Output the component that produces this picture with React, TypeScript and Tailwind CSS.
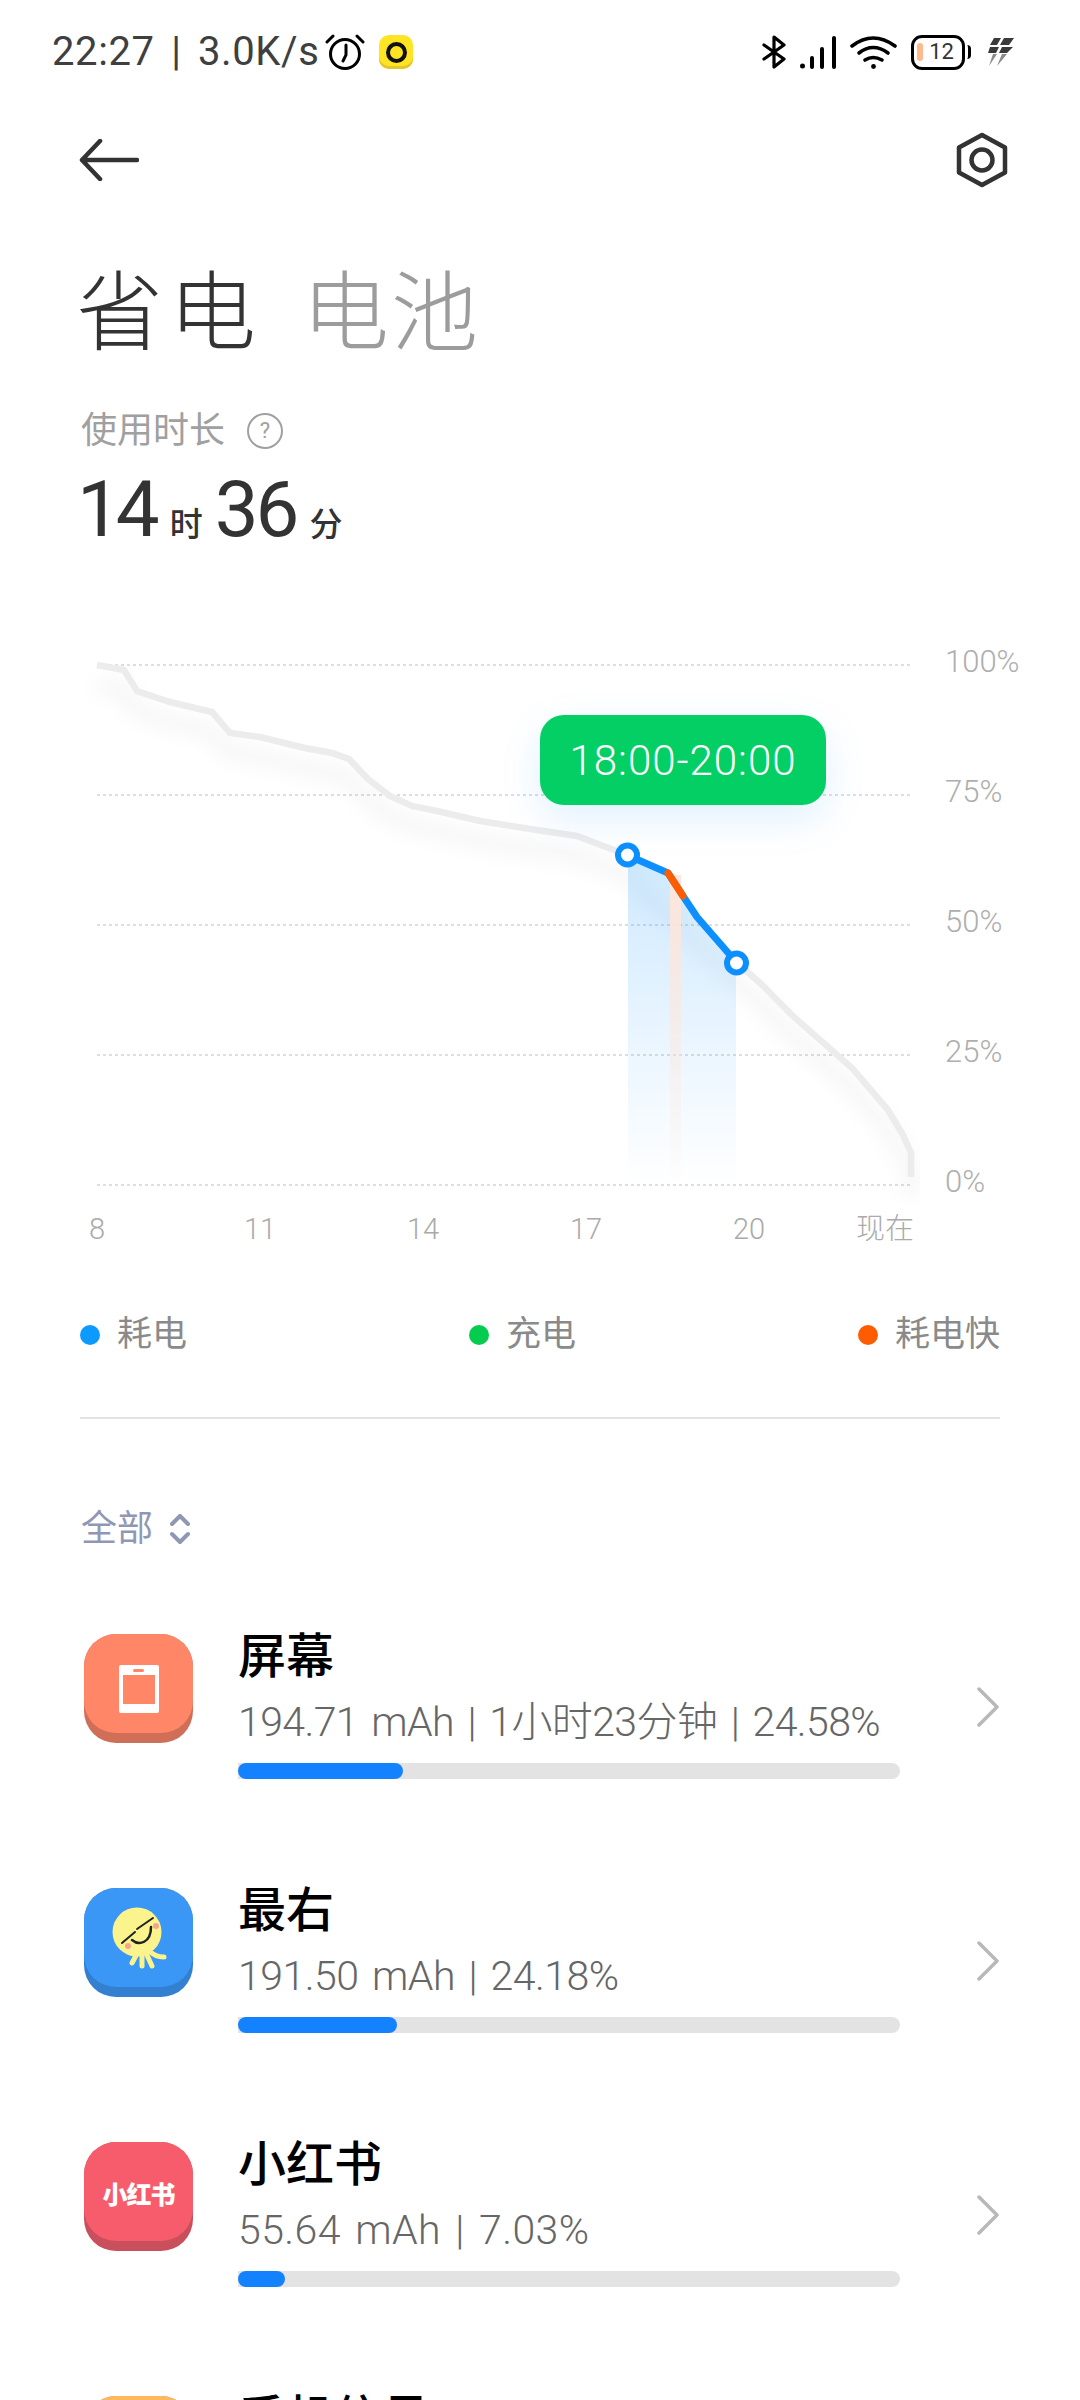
import React from 'react';

const grayBefore = '97,665 124,670 137,691 170,702 212,712 230,733 260,737 305,748 332,753 349,759 368,779 390,796 412,806 437,811 480,821 537,830 577,836 627,855';
const grayAfter = '737,963 760,983 795,1018 852,1068 888,1110 903,1135 911,1153 911,1177';

const PhoneIcon = () => (
  <svg className="mt-[10px]" width="42" height="48" viewBox="0 0 42 48">
    <rect x="1" y="0" width="40" height="48" rx="2" fill="#fff" />
    <rect x="5" y="10" width="32" height="29" fill="#ff8768" />
    <rect x="15" y="4" width="11" height="3" rx="1.5" fill="#ff8768" />
  </svg>
);

const OctopusIcon = () => (
  <svg width="60" height="66" viewBox="0 0 60 66" fill="none">
    <g stroke="#fbf38c" strokeWidth="5" strokeLinecap="round">
      <path d="M29 47 L23 58" />
      <path d="M33 49 L33 61" />
      <path d="M37 48 L43 61" />
      <path d="M39 45 Q46 52 55 52" />
    </g>
    <circle cx="28" cy="27" r="24.5" fill="#fbf38c" />
    <circle cx="47" cy="21" r="3" fill="#f5a58c" />
    <circle cx="19" cy="41" r="3" fill="#f5a58c" />
    <path d="M13 38 L26 27 M28 24 L44 13" stroke="#222" strokeWidth="2" strokeLinecap="round" />
    <path d="M23 35 C30 41 42 38 42 22" stroke="#222" strokeWidth="2.5" strokeLinecap="round" />
  </svg>
);

const rows = [
  { name: '屏幕', detail: '194.71 mAh | 1小时23分钟 | 24.58%', fill: 165, spacing: 'tracking-[-0.6px]', face: 'bg-[#ff8768]', edge: 'bg-[#d06f57]', icon: <PhoneIcon /> },
  { name: '最右', detail: '191.50 mAh | 24.18%', fill: 159, spacing: 'tracking-[-0.5px]', face: 'bg-[#3a97f5]', edge: 'bg-[#337fd0]', icon: <OctopusIcon /> },
  { name: '小红书', detail: '55.64 mAh | 7.03%', fill: 47, spacing: 'tracking-[0.4px]', face: 'bg-[#f65c6b]', edge: 'bg-[#c94f5c]', icon: <span className="pt-[8px] text-[25px] leading-none font-black tracking-[-1px] text-white">小红书</span> },
  { name: '手机信号', detail: '49.12 mAh | 6.20%', fill: 42, spacing: 'tracking-[0.4px]', face: 'bg-[#ffb85c]', edge: 'bg-[#d09a50]', icon: null },
];

const StatusIcons = () => (
  <div className="flex items-center">
    <svg width="24" height="34" viewBox="0 0 24 34" fill="none" stroke="#000" strokeWidth="3.2" strokeLinecap="round" strokeLinejoin="round">
      <path d="M2 10 L22 24 L12 32 L12 2 L22 10 L2 24" />
    </svg>
    <svg className="ml-[14px]" width="37" height="33" viewBox="0 0 37 33" fill="#000">
      <circle cx="2.5" cy="30" r="2.5" />
      <rect x="10" y="20" width="4" height="13" rx="2" />
      <rect x="20" y="11" width="4" height="22" rx="2" />
      <rect x="32" y="0" width="4" height="33" rx="2" />
    </svg>
    <svg className="ml-[13px]" width="47" height="34" viewBox="0 0 47 34" fill="none" stroke="#000" strokeWidth="3.6" strokeLinecap="round">
      <path d="M2 11 Q23 -5 45 11" />
      <path d="M9 18 Q23 7 38 18" />
      <path d="M15 25 Q23 20 32 25" />
      <circle cx="23.5" cy="31.5" r="2.4" fill="#000" stroke="none" />
    </svg>
    <div className="relative ml-[14px] flex h-[35px] w-[54px] items-center justify-center rounded-[11px] border-[3px] border-black">
      <span className="absolute left-[3px] h-[18px] w-[6px] rounded-full bg-[#ffb98a]" />
      <span className="ml-[7px] text-[22px] leading-none text-[#333]">12</span>
      <span className="absolute right-[-9px] h-[14px] w-[4px] rounded-r-full border-r-[3px] border-black" />
    </div>
    <svg className="ml-[23px]" width="27" height="28" viewBox="0 0 27 28" fill="#3a3a3a">
      <path d="M6 0 H13 L9 7 H2 Z" />
      <path d="M16 0 H26 L21 7 H12 Z" />
      <path d="M2 9 H11 L8 15 H0 Z" />
      <path d="M14 9 H25 L19 15 H11 Z" />
      <path d="M5 16 H9 L1 28 Z" fill="#8a8a8a" />
      <path d="M14 16 H19 L9 28 Z" fill="#8a8a8a" />
    </svg>
  </div>
);

const App: React.FC = () => {
  return (
    <div className="h-[2400px] w-[1080px] overflow-hidden bg-white font-['Roboto','Noto_Sans_CJK_SC',sans-serif]">
      {/* status bar */}
      <div className="flex h-[105px] items-center pl-[52px] pr-[65px] pb-[1px]">
        <span className="text-[40px] leading-none tracking-[0.6px] text-[#3f3f3f] [word-spacing:6px]">22:27 | 3.0K/s</span>
        <svg className="ml-[6px]" width="40" height="36" viewBox="0 0 40 36" fill="none" stroke="#000" strokeWidth="3" strokeLinecap="round">
          <circle cx="20" cy="20" r="14.5" />
          <path d="M21 11 V21 L18 27" />
          <path d="M2 8 L8 2 M32 2 L38 8" />
        </svg>
        <div className="ml-[14px] flex h-[34px] w-[34px] items-center justify-center rounded-[10px] bg-[#ffe423] shadow-[inset_0_-3px_0_#e3c62a]">
          <span className="h-[21px] w-[21px] rounded-full border-[4px] border-[#111]" />
        </div>
        <div className="ml-auto"><StatusIcons /></div>
      </div>

      {/* nav */}
      <div className="flex h-[110px] items-center justify-between pl-[79px] pr-[72px]">
        <svg width="60" height="42" viewBox="0 0 60 42" fill="none" stroke="#333" strokeWidth="4.5" strokeLinecap="round" strokeLinejoin="round">
          <path d="M21 2 L3 21 L21 40 M3 21 H58" />
        </svg>
        <svg width="52" height="56" viewBox="0 0 52 56" fill="none" stroke="#333" strokeWidth="4.5" strokeLinejoin="round">
          <path d="M26 3 L49 15.5 V40.5 L26 53 L3 40.5 V15.5 Z" />
          <circle cx="26" cy="28" r="10.5" />
        </svg>
      </div>

      {/* title tabs */}
      <div className="mt-[49px] flex pl-[76px] text-[87px] leading-[100px] font-light">
        <span className="tracking-[6px] text-[#333]">省电</span>
        <span className="ml-[40px] tracking-[2px] text-[#9c9c9c]">电池</span>
      </div>

      {/* usage time */}
      <div className="mt-[47px] flex items-center pl-[81px]">
        <span className="text-[36px] leading-[40px] text-[#a0a0a0]">使用时长</span>
        <span className="ml-[22px] flex h-[36px] w-[36px] items-center justify-center rounded-full border-[2px] border-[#a0a0a0] text-[22px] leading-none text-[#a0a0a0]">?</span>
      </div>
      <div className="mt-[14px] flex items-baseline pl-[77px] text-[#333]">
        <span className="text-[78px] leading-[90px] tracking-[-5px]">14</span>
        <span className="ml-[15px] text-[33px] font-medium">时</span>
        <span className="ml-[12px] text-[78px] leading-[90px] tracking-[-3px]">36</span>
        <span className="ml-[13px] text-[33px] font-medium">分</span>
      </div>

      {/* chart */}
      <div className="relative mt-[85px] flex">
        <svg className="ml-[80px] shrink-0" width="840" height="565" viewBox="80 640 840 565" fill="none">
          <defs>
            <filter id="blur" x="-10%" y="-10%" width="120%" height="120%">
              <feGaussianBlur stdDeviation="10" />
            </filter>
            <linearGradient id="blueFade" gradientUnits="userSpaceOnUse" x1="0" y1="855" x2="0" y2="1185">
              <stop offset="0" stopColor="#2aa0ff" stopOpacity="0.23" />
              <stop offset="1" stopColor="#2aa0ff" stopOpacity="0" />
            </linearGradient>
            <linearGradient id="orangeFade" gradientUnits="userSpaceOnUse" x1="0" y1="880" x2="0" y2="1185">
              <stop offset="0" stopColor="#ffe6da" stopOpacity="1" />
              <stop offset="1" stopColor="#ffe6da" stopOpacity="0" />
            </linearGradient>
          </defs>
          {[665, 795, 925, 1055, 1185].map((y) => (
            <line key={y} x1="97" x2="913" y1={y} y2={y} stroke="#d4d4d4" strokeWidth="1.5" strokeDasharray="3 3" />
          ))}
          <polyline points={`${grayBefore} 737,963 ${grayAfter}`} stroke="#000" strokeOpacity="0.07" strokeWidth="8" transform="translate(0 20)" filter="url(#blur)" />
          <polygon points="628,855 668,873 683,896 697,917 736,963 736,1185 628,1185" fill="url(#blueFade)" />
          <rect x="670" y="875" width="11" height="310" fill="url(#orangeFade)" />
          <polyline points={grayBefore} stroke="#ececec" strokeWidth="6.5" />
          <polyline points={grayAfter} stroke="#ececec" strokeWidth="6.5" />
          <polyline points="627,855 668,873 683,896 697,917 737,963" stroke="#0d8fff" strokeWidth="7" strokeLinejoin="round" />
          <polyline points="668,873 683,896" stroke="#ff5c00" strokeWidth="7" strokeLinecap="round" />
          <circle cx="627.5" cy="855" r="9.5" fill="#fff" stroke="#0d8fff" strokeWidth="6" />
          <circle cx="736.5" cy="963" r="9.5" fill="#fff" stroke="#0d8fff" strokeWidth="6" />
        </svg>
        <div className="ml-[25px] mt-[2px] flex flex-col gap-[90px] text-[31px] leading-[40px] font-light text-[#aeaeae]">
          <span>100%</span>
          <span>75%</span>
          <span>50%</span>
          <span>25%</span>
          <span>0%</span>
        </div>
        <div className="absolute left-[540px] top-[75px] flex h-[90px] w-[286px] items-center justify-center rounded-[24px] bg-[#04cf65] text-[42px] font-light tracking-[1px] text-white shadow-[0_14px_40px_rgba(13,143,255,0.13)]">
          18:00-20:00
        </div>
      </div>

      {/* time axis */}
      <div className="mt-[4px] flex pl-[77px] text-[29px] leading-[40px] font-light text-[#aaaaaa]">
        <div className="flex gap-[123px] text-center">
          <span className="w-[40px]">8</span>
          <span className="w-[40px]">11</span>
          <span className="w-[40px]">14</span>
          <span className="w-[40px]">17</span>
          <span className="w-[40px]">20</span>
        </div>
        <span className="ml-[87px]">现在</span>
      </div>

      {/* legend */}
      <div className="mt-[66px] flex justify-between px-[80px] text-[35px] leading-[40px] text-[#8a8a8a]">
        <div className="flex items-center gap-[17px]"><span className="h-[20px] w-[20px] rounded-full bg-[#0d9aff]" />耗电</div>
        <div className="flex items-center gap-[17px]"><span className="h-[20px] w-[20px] rounded-full bg-[#04cc4e]" />充电</div>
        <div className="flex items-center gap-[17px]"><span className="h-[20px] w-[20px] rounded-full bg-[#ff5c00]" />耗电快</div>
      </div>

      <div className="mx-[80px] mt-[62px] h-[2px] bg-[#e3e3e3]" />

      {/* filter */}
      <div className="mt-[90px] flex items-center gap-[16px] pl-[81px] text-[36px] leading-[40px] text-[#9097b5]">
        全部
        <svg width="22" height="30" viewBox="0 0 22 30" fill="none" stroke="#9097b5" strokeWidth="4" strokeLinecap="round" strokeLinejoin="round">
          <path d="M3 10 L11 2 L19 10 M3 20 L11 28 L19 20" />
        </svg>
      </div>

      {/* usage rows */}
      <div className="mt-[85px] flex flex-col gap-[145px] pl-[84px]">
        {rows.map((row) => (
          <div key={row.name} className="flex h-[109px] items-start">
            <div className={`relative h-[109px] w-[109px] shrink-0 overflow-hidden rounded-[32px] ${row.edge}`}>
              <div className={`flex h-[99px] w-[109px] items-center justify-center rounded-[32px] ${row.face}`}>{row.icon}</div>
            </div>
            <div className="ml-[45px] w-[662px] shrink-0">
              <div className="text-[48px] leading-[46px] font-medium text-black">{row.name}</div>
              <div className={`mt-[19px] text-[41px] leading-[46px] font-light text-[#666666] [word-spacing:4px] ${row.spacing}`}>{row.detail}</div>
              <div className="mt-[18px] h-[16px] overflow-hidden rounded-r-full bg-[#e3e3e3]">
                <div className="h-full rounded-full bg-[#1482ff]" style={{ width: row.fill }} />
              </div>
            </div>
            <svg className="ml-[76px] mt-[53px] shrink-0" width="24" height="40" viewBox="0 0 24 40" fill="none" stroke="#b8b8b8" strokeWidth="3.5" strokeLinecap="round" strokeLinejoin="round">
              <path d="M3 2 L21 20 L3 38" />
            </svg>
          </div>
        ))}
      </div>
    </div>
  );
};

export default App;
